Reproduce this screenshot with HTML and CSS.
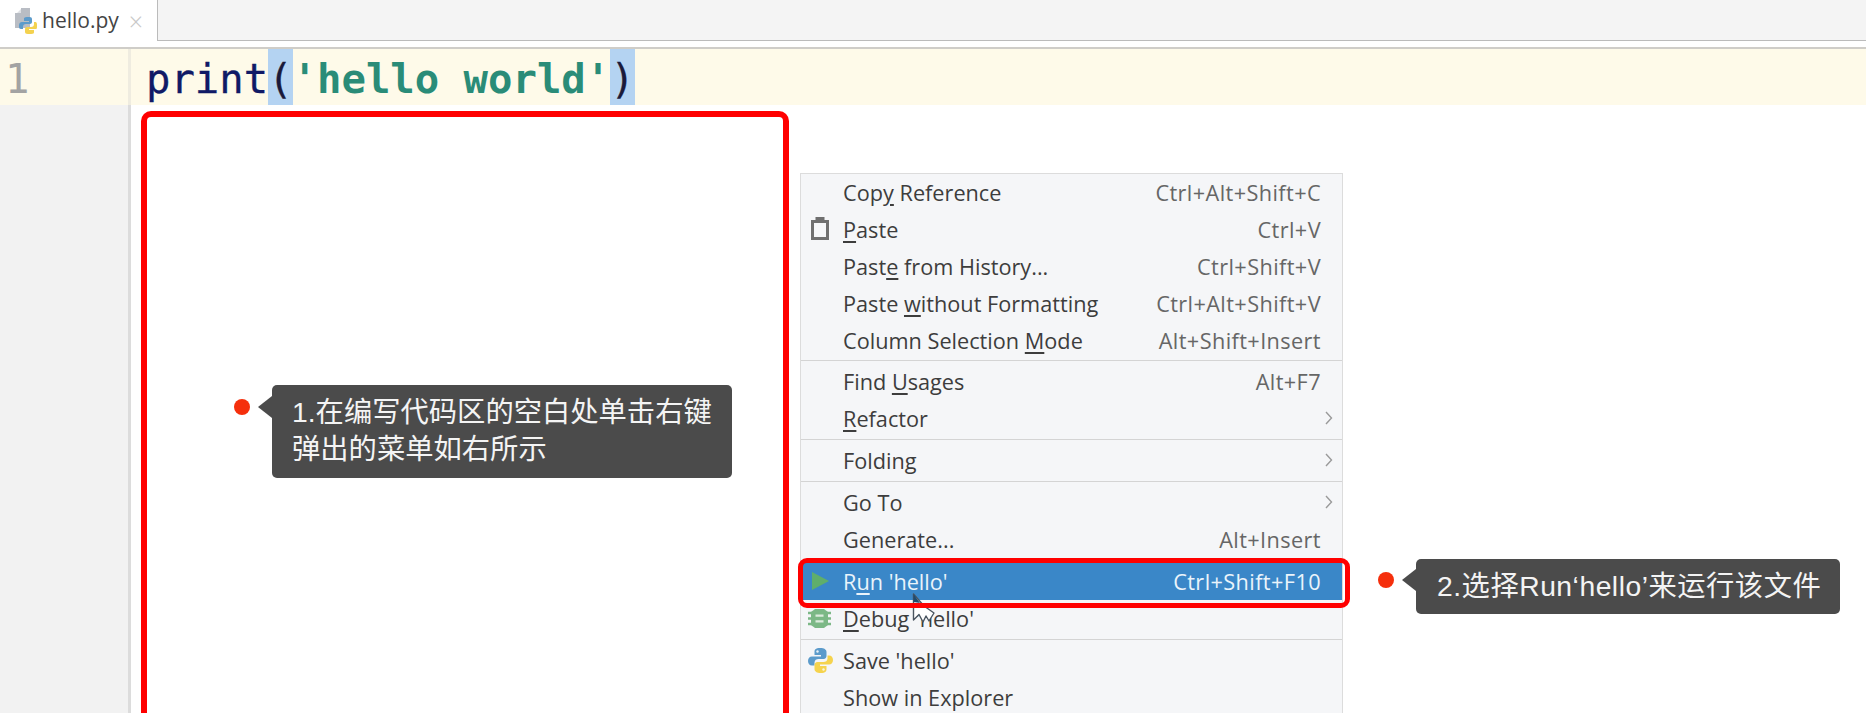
FILE: index.html
```html
<!DOCTYPE html>
<html lang="zh-CN">
<head>
<meta charset="utf-8">
<title>hello.py</title>
<link rel="stylesheet" href="styles.css">
</head>
<body>
<div class="tabbar">
  <div class="tab">
    <svg class="tab-icon" viewBox="0 0 22 26">
      <path d="M0 5 L6 5 L6 0 L15 0 L15 20 L0 20 Z" fill="#b9bdc4"/>
      <path d="M6 1 L6 5 L2 5 Z" fill="#dfe1e5"/>
      <path d="M13 9 c-4 0-4 1-4 2 v2 h5 v1 h-7 c-2 0-3 1-3 4 s1 3 3 3 h1 v-2 c0-2 1-3 3-3 h4 c1 0 2-1 2-2 v-3 c0-2-2-2-4-2z" fill="#5c9bcb"/>
      <path d="M15 26 c4 0 4-1 4-2 v-2 h-5 v-1 h7 c1 0 1-1 1-4 s-1-3-2-3 h-1 v2 c0 2-1 3-3 3 h-4 c-1 0-2 1-2 2 v3 c0 2 2 2 5 2z" fill="#f4d24f"/>
    </svg>
    <span class="tab-name">hello.py</span>
    <span class="tab-close">×</span>
  </div>
  <div class="tab-rest"></div>
</div>
<div class="strip"></div>
<div class="editor">
  <div class="line">
    <div class="gutter-num">1</div>
    <div class="code"><span class="fn">print</span><span class="brace">(</span><span class="str">'hello world'</span><span class="brace">)</span></div>
  </div>
  <div class="rest">
    <div class="gutter"></div>
    <div class="blank"></div>
  </div>
</div>

<div class="menu">
  <div class="row"><span class="label">Cop<u>y</u> Reference</span><span class="keys">Ctrl+Alt+Shift+C</span></div>
  <div class="row">
    <svg class="icon clip" viewBox="0 0 18 23"><path d="M1.5 4.5 H16.5 V21.5 H1.5 Z M6 4.5 V1.5 H12 V4.5" fill="none" stroke="#6f6f6f" stroke-width="3"/></svg>
    <span class="label"><u>P</u>aste</span><span class="keys">Ctrl+V</span></div>
  <div class="row"><span class="label">Past<u>e</u> from History...</span><span class="keys">Ctrl+Shift+V</span></div>
  <div class="row"><span class="label">Paste <u>w</u>ithout Formatting</span><span class="keys">Ctrl+Alt+Shift+V</span></div>
  <div class="row"><span class="label">Column Selection <u>M</u>ode</span><span class="keys">Alt+Shift+Insert</span></div>
  <div class="sep"></div>
  <div class="row"><span class="label">Find <u>U</u>sages</span><span class="keys">Alt+F7</span></div>
  <div class="row"><span class="label"><u>R</u>efactor</span><svg class="arrow" viewBox="0 0 8 14"><path d="M1 1 L6.5 7 L1 13" fill="none" stroke="#9a9a9a" stroke-width="1.4"/></svg></div>
  <div class="sep"></div>
  <div class="row"><span class="label">Folding</span><svg class="arrow" viewBox="0 0 8 14"><path d="M1 1 L6.5 7 L1 13" fill="none" stroke="#9a9a9a" stroke-width="1.4"/></svg></div>
  <div class="sep"></div>
  <div class="row"><span class="label">Go To</span><svg class="arrow" viewBox="0 0 8 14"><path d="M1 1 L6.5 7 L1 13" fill="none" stroke="#9a9a9a" stroke-width="1.4"/></svg></div>
  <div class="row"><span class="label">Generate...</span><span class="keys">Alt+Insert</span></div>
  <div class="sep"></div>
  <div class="row active">
    <svg class="icon play" viewBox="0 0 17 18"><path d="M0 0 L17 9 L0 18 Z" fill="#5fae6b"/></svg>
    <span class="label">R<u>u</u>n 'hello'</span><span class="keys">Ctrl+Shift+F10</span></div>
  <div class="row">
    <svg class="icon bug" viewBox="0 0 23 19"><path d="M7 0 H16 L20 3 V16 L16 19 H7 L3 16 V3 Z" fill="#7cb886"/><path d="M0 4 H23 M0 9.5 H23 M0 15 H23" stroke="#7cb886" stroke-width="2.4"/><path d="M7.5 6.7 H15.5 M7.5 12.3 H15.5" stroke="#dcebdd" stroke-width="2.2"/></svg>
    <span class="label"><u>D</u>ebug 'hello'</span></div>
  <div class="sep"></div>
  <div class="row">
    <svg class="icon py" viewBox="0 0 25 25"><path d="M12.5 0 C7 0 6.5 2 6.5 4 V7 H13 V8.5 H4 C1.5 8.5 0 10.5 0 13 S1.5 17.5 4 17.5 H6.5 V14.5 C6.5 12 8.5 11 10.5 11 H15.5 C17.5 11 18.5 9.5 18.5 8 V4 C18.5 1.5 16 0 12.5 0 Z" fill="#5c9bcb"/><circle cx="9.5" cy="3.5" r="1.2" fill="#e8f1f8"/><path d="M12.5 25 C18 25 18.5 23 18.5 21 V18 H12 V16.5 H21 C23.5 16.5 25 14.5 25 12 S23.5 7.5 21 7.5 H19.5 V10.5 C19.5 13 17.5 14 15.5 14 H9.5 C7.5 14 6.5 15.5 6.5 17 V21 C6.5 23.5 9 25 12.5 25 Z" fill="#f5d34e"/><circle cx="15.5" cy="21.5" r="1.2" fill="#fdf6d8"/></svg>
    <span class="label">Save 'hello'</span></div>
  <div class="row"><span class="label">Show in Explorer</span></div>
</div>

<svg class="cursor" viewBox="0 0 24 30"><path d="M1.5 1 L1.5 27 L7 21.5 L11 29 L14 23 L17 28 L22 20 L12 13 Z" fill="#fff" stroke="#4a5560" stroke-width="1.4" stroke-linejoin="round"/><path d="M1.5 1 L1.5 9 L8 10 Z" fill="#1f4a6e"/></svg>

<div class="frame frame-code"></div>
<div class="frame frame-run"></div>

<div class="dot dot-one"></div>
<div class="note note-one">1.在编写代码区的空白处单击右键<br>弹出的菜单如右所示</div>
<div class="dot dot-two"></div>
<div class="note note-two">2.选择Run‘hello’来运行该文件</div>
</body>
</html>
```
FILE: styles.css
```css
* { box-sizing: border-box; }
html, body { margin: 0; height: 713px; overflow: hidden; background: #fff; }
body { display: flex; flex-direction: column; font-family: "Open Sans", "Noto Sans", sans-serif; }

.tabbar { display: flex; height: 41px; flex: none; }
.tab { width: 157px; display: flex; align-items: center; background: #fff; padding: 0 0 0 15px; }
.tab-icon { width: 22px; height: 26px; margin-right: 5px; }
.tab-name { font-size: 21px; color: #444; line-height: 41px; }
.tab-close { font-size: 25px; color: #c8c8c8; margin-left: 10px; font-weight: 300; }
.tab-rest { flex: 1; background: #f4f4f4; border-left: 1px solid #bbb; border-bottom: 1px solid #bbb; }
.strip { height: 8px; flex: none; background: #fff; border-bottom: 2px solid #cfcdc8; }

.editor { flex: 1; display: flex; flex-direction: column; min-height: 0; }
.line { height: 56px; flex: none; display: flex; background: #fefae9; }
.gutter-num { width: 128px; flex: none; font: 40.6px/60px "DejaVu Sans Mono", monospace; color: #a3a3a3; padding-left: 5px; }
.code { border-left: 3px solid #efece0; padding-left: 15px; font: 40.6px/60px "DejaVu Sans Mono", monospace; display: flex; -webkit-text-stroke: .3px; }
.fn { color: #101a66; }
.str { color: #2a8c78; font-weight: bold; -webkit-text-stroke: 0; }
.brace { background: #b4d3f2; color: #1a1a3a; height: 56px; }
.rest { flex: 1; display: flex; }
.gutter { width: 128px; flex: none; background: #f2f2f2; }
.blank { flex: 1; background: #fff; border-left: 3px solid #dcdcdc; }

.menu { position: absolute; left: 800px; top: 173px; width: 543px; height: 540px; background: #f5f6f8; border: 1px solid #dcdcdc; border-bottom: 0; font-size: 21.7px; color: #3d3d3d; overflow: hidden; }
.row { height: 36.9px; position: relative; display: flex; align-items: center; justify-content: space-between; padding: 0 21px 0 42px; white-space: nowrap; }
.sep { height: 5px; position: relative; }
.sep::after { content: ""; position: absolute; left: 0; right: 0; top: 2px; height: 1px; background: #d4d4d4; }
.label u { text-underline-offset: 3px; text-decoration-thickness: 1.5px; }
.keys { color: #666; letter-spacing: .4px; }
.active { background: #3a87c8; color: #eaf4fb; }
.active .keys { color: #eaf4fb; }
.arrow { position: absolute; right: 9px; top: 11px; width: 8px; height: 14px; }
.icon { position: absolute; }
.clip { left: 10px; top: 6px; width: 18px; height: 23px; }
.play { left: 11px; top: 9px; width: 17px; height: 18px; }
.bug { left: 7px; top: 9px; width: 23px; height: 19px; }
.py { left: 7px; top: 6px; width: 25px; height: 25px; }

.cursor { position: absolute; left: 912px; top: 593px; width: 24px; height: 30px; }

.frame { position: absolute; border: 5px solid #f00; }
.frame-code { left: 141px; top: 111px; width: 648px; height: 602px; border-width: 6px 6px 0; border-radius: 10px 10px 0 0; }
.frame-run { left: 798px; top: 558px; width: 552px; height: 50px; border-radius: 9px; }

.dot { position: absolute; width: 16px; height: 16px; border-radius: 50%; background: #f52f0c; }
.dot-one { left: 234px; top: 399px; }
.dot-two { left: 1378px; top: 572px; }

.note { position: absolute; background: #4b4b4b; color: #f4f4f4; border-radius: 5px; font-family: "Liberation Sans", "Noto Sans CJK SC", sans-serif; font-size: 28.3px; line-height: 37px; white-space: nowrap; }
.note::before { content: ""; position: absolute; left: -14px; width: 0; height: 0; border-style: solid; border-width: 11px 14px 11px 0; border-color: transparent #4b4b4b transparent transparent; }
.note-one { left: 272px; top: 385px; width: 460px; height: 93px; padding: 9px 0 0 20px; }
.note-one::before { top: 11px; }
.note-two { left: 1416px; top: 559px; width: 424px; height: 55px; padding: 9px 0 0 21px; letter-spacing: .5px; }
.note-two::before { top: 10px; }
```
